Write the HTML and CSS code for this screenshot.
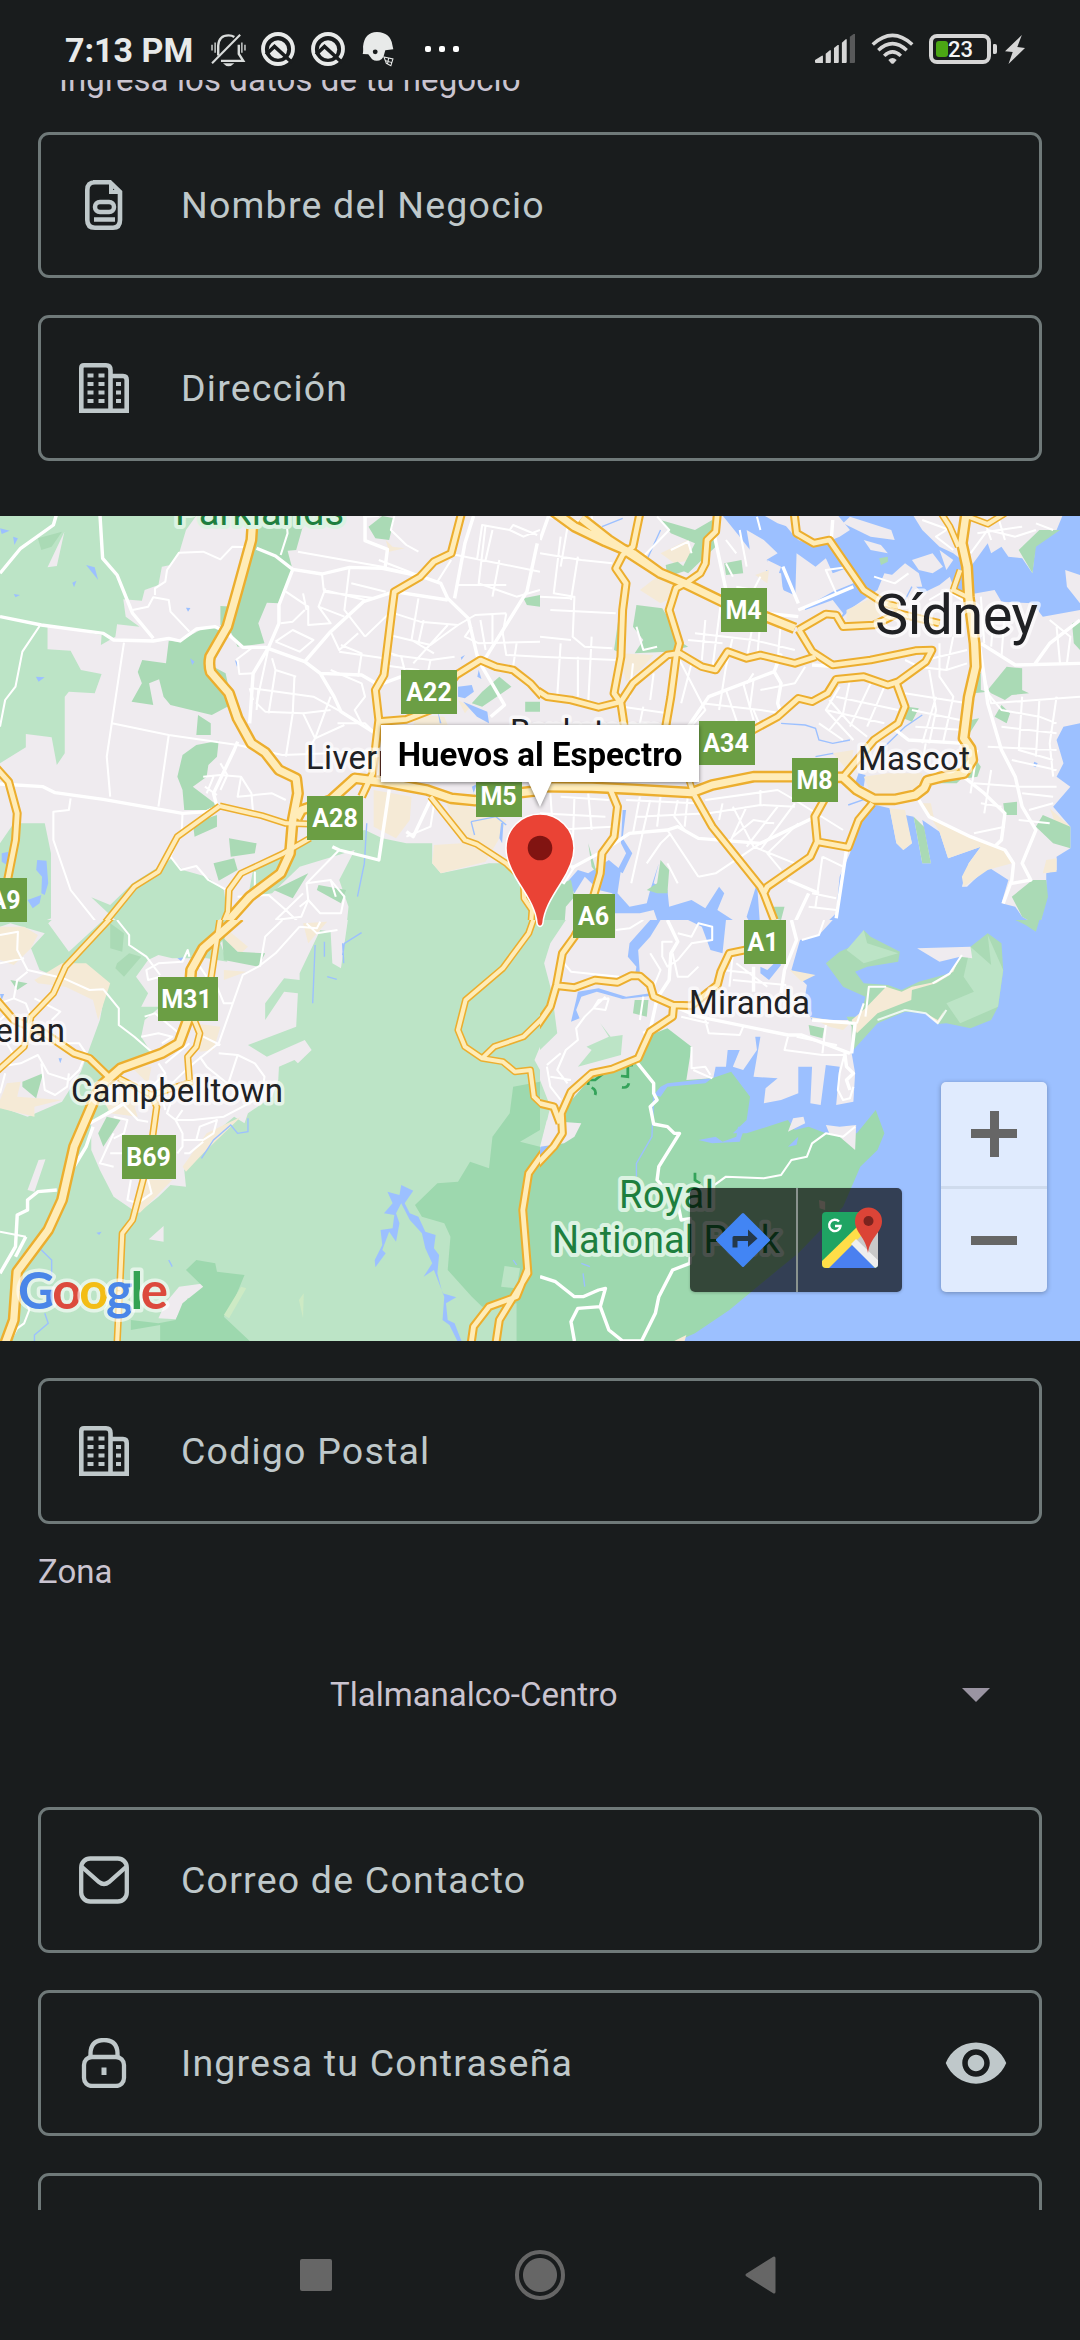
FILE: index.html
```html
<!DOCTYPE html>
<html lang="es">
<head>
<meta charset="utf-8">
<title>Registro de negocio</title>
<link rel="stylesheet" href="styles.css">
</head>
<body>
<div class="screen">
  <header class="status">
    <div class="status-left">
      <span class="clock">7:13 PM</span>
      <svg class="ic-bell" viewBox="611 98 102 101" preserveAspectRatio="none">
        <path d="M632 165V136Q634 105 662 105Q672 105 679 110M692 133V160L705 181H640" fill="none" stroke="#d9dcdb" stroke-width="7"/>
        <path d="M614 188L696 103" stroke="#d9dcdb" stroke-width="6"/>
        <path d="M614 133V150M623 126V157M701 126V157M710 133V150" stroke="#d9dcdb" stroke-width="4"/>
        <path d="M646 188H679Q662 206 646 188Z" fill="#d9dcdb"/>
      </svg>
      <svg class="ic-round" viewBox="0 0 34 34"><use href="#search-badge"/></svg>
      <svg class="ic-round second" viewBox="0 0 34 34"><use href="#search-badge"/></svg>
      <svg class="ic-helmet" viewBox="1051 95 92 104" preserveAspectRatio="none">
        <path fill="#e8eae9" fill-rule="evenodd" d="M1053 160Q1055 154 1054 138Q1058 96 1094 95Q1132 96 1138 132L1141 146L1118 149L1113 168L1108 175Q1094 186 1080 176L1069 161ZM1082 154a7 7 0 1 0 14 0a7 7 0 1 0-14 0Z"/>
        <path d="M1114 169L1140 175L1134 195L1121 188ZM1128 171L1124 191M1117 180L1137 186" fill="none" stroke="#e8eae9" stroke-width="3"/>
      </svg>
      <span class="dots"><i></i><i></i><i></i></span>
    </div>
    <div class="status-right">
      <svg class="ic-signal" viewBox="799 102 116 87" preserveAspectRatio="none">
        <path fill="#d6d6d6" d="M799 187V180L819 167Q822 166 822 169V189H801ZM830 189V161L842 151H845V187L843 189ZM854 189V144L865 135H868V187L866 189ZM877 189V128L888 118H891V187L889 189Z"/>
        <path fill="#58595a" d="M900 189V110L911 102H915V187L913 189Z"/>
      </svg>
      <svg class="ic-wifi" viewBox="960 100 124 92" preserveAspectRatio="none">
        <path fill="none" stroke="#d6d6d6" stroke-width="10" d="M965 134Q1022 80 1079 134M981 151Q1022 112 1063 151M998 168Q1022 144 1046 168"/>
        <path fill="#d6d6d6" d="M1010 180Q1022 168 1034 180L1026 190Q1022 193 1018 190Z"/>
      </svg>
      <span class="battery"><b></b><em>23</em></span>
      <svg class="ic-bolt" viewBox="1349 104 57 87" preserveAspectRatio="none"><path fill="#d6d6d6" d="M1397 104L1349 153L1371 155L1359 191L1406 143L1384 140Z"/></svg>
    </div>
  </header>

  <main class="form">
    <p class="intro">Ingresa los datos de tu negocio</p>
    <div class="field">
      <svg class="lead" viewBox="0 0 50 50" fill="none" stroke="#bfc8ca">
        <path stroke-width="4.600" d="M14 2.300H31L41 12V40Q41 47.700 34 47.700H16Q8.300 47.700 8.300 40V10Q8.300 2.300 16 2.300"/>
        <path stroke-width="4" d="M32 3V12H41"/><rect x="16" y="22" width="19" height="10" rx="5" stroke-width="4.500"/><path stroke-width="4.500" d="M15 39.500H36"/>
      </svg>
      <span class="label">Nombre del Negocio</span>
    </div>
    <div class="field">
      <svg class="lead" viewBox="0 0 50 50"><use href="#building"/></svg>
      <span class="label">Dirección</span>
    </div>

    <section class="map">
      <svg class="map-art" viewBox="0 0 1080 825">
        <defs>
          <g id="building" fill="none" stroke="#bfc8ca">
            <path stroke-width="4.600" d="M2.300 50V5Q2.300 2.300 5 2.300H27Q31.500 2.300 31.500 7V48M32 13H44Q47.700 13 47.700 17V47.700H2"/>
            <path stroke-width="4" stroke-dasharray="6 5" d="M8.500 12.500H27M8.500 21H27M8.500 29.500H27M8.500 38H27"/>
            <path stroke-width="4" d="M37 21h5M37 29.500h5M37 38h5"/>
          </g>
          <g id="search-badge">
            <circle cx="17" cy="17" r="15" fill="none" stroke="#e8eae9" stroke-width="3.800"/>
            <circle cx="17" cy="17.500" r="9.200" fill="#e8eae9"/>
            <path d="M5 22.500L13.500 14.500L31 30.500" fill="none" stroke="#191c1d" stroke-width="3.600"/>
          </g>

          <g id="roads-nw">
            <path class="w1" d="M735 10L730 90L690 240L660 350L610 440Q605 465 612 487L665 550L690 625L730 700L770 727L810 780L860 805L865 850L850 930L842 1030L815 1090L725 1160L630 1270"/>
            <path class="w2" d="M1340 10L1310 130L1260 155L1220 200L1145 245L1137 310L1115 495L1090 540L1100 630L1092 700L1082 790L1050 860M1100 635L1180 628L1250 600L1325 495L1395 450L1440 470L1490 480L1540 520L1575 560"/>
            <path class="w1" d="M862 925L875 900L960 870L1030 805L1110 815L1240 840L1310 865L1380 872L1480 852L1580 840"/>
            <path class="w3" d="M638 888L760 917L830 940L900 942M638 888L515 980L460 1085L390 1130L280 1270M900 985L820 1032L700 1090L665 1140L662 1205L640 1260M1250 860L1350 990L1385 1003L1470 1060L1520 1110L1522 1165L1545 1200L1540 1270"/>
            <path class="w2" d="M-10 775L25 815L50 910L45 990L22 1110"/>
          </g>
          <g id="roads-ne">
            <path class="w1" d="M40 5L100 50L190 95L270 130L350 190L420 220L540 280L660 322L740 355M120 25L200 90L350 190"/>
            <path class="w1" d="M-10 830L150 832L270 838L440 848L500 825L620 800L730 800L880 802L920 840L970 868L1030 868L1090 855L1115 835L1125 812L1170 800L1230 790L1255 750L1250 715L1230 685L1245 560L1265 470L1262 400L1245 260L1240 170L1225 100L1238 5"/>
            <path class="w2" d="M290 10L270 110L240 135L220 175L250 220L240 300L235 440L215 550L235 580L245 650M515 10L510 65L485 90L480 160L465 190L430 215L395 235L375 300L405 400L395 440L380 560L365 650"/>
            <path class="w2" d="M-10 540L20 560L90 570L170 592L235 575L270 520L370 435L405 430L470 470L510 480L545 425L600 445L640 435L740 460L800 440M738 10L745 70L795 100L840 90L900 180L940 240L1000 280L1040 290"/>
            <path class="w2" d="M750 360L830 312L860 315L880 350L970 345L1040 310L1160 340M752 360L790 425L850 465L960 450L1090 422L1138 420L1120 455L1040 515L1010 525L940 500L860 508L835 550L790 575L750 565L690 620L610 665M1035 520L1060 590L1040 640L970 690L885 795"/>
            <path class="w2" d="M965 880L925 930L895 1012L805 995L798 920L825 870M805 995L785 1040L660 1130L650 1150L680 1230M448 855L500 950L640 1130L650 1150M205 840L225 890L215 980L180 1030L175 1090L155 1160"/>
            <path class="w3" d="M1165 10L1190 50L1215 110M1220 180L1200 240L1240 260M1238 18L1300 42L1350 10M430 800L445 850"/>
          </g>
          <g id="roads-sw">
            <path class="w3" d="M325 -10L190 140L155 220L90 290L70 380L-10 455M1552 -10L1535 40L1460 145L1352 240L1330 330L1350 380L1400 415L1460 425L1495 455L1540 450L1550 530L1580 560M1400 415L1435 380L1520 350L1580 290M640 -10L625 90L612 180M560 290L580 340L570 380L545 410L550 480M345 475L440 525L455 560L443 650M440 525L560 485M418 770L385 900L355 940L348 1100L340 1270"/>
            <path class="w2" d="M-10 240L40 300L130 340L215 400L260 415L320 475"/>
            <path class="w1" d="M695 -10L590 85L555 150L545 300L520 370L470 400L350 445L290 500L215 680L180 840L140 930L50 1055L40 1200L15 1270"/>
            <path class="w2" d="M1580 695L1535 760L1518 870L1533 1060L1450 1200L1440 1270M1533 1045L1500 1130L1420 1160L1375 1220L1368 1270"/>
          </g>
          <g id="roads-se">
            <path class="w2" d="M130 -10L100 50L65 100L48 195L30 260L-10 320M48 197L100 203L160 180L225 187L265 167L290 168L320 195L330 230L385 255L440 257L490 215L515 195L525 155L550 100L620 85M388 255L385 290L320 335L300 380L285 415L210 447L150 460L90 515L62 580L65 640L40 680L-10 735M-10 548L40 560L58 610"/>
          </g>
        </defs>

        <svg x="0" y="-6" width="540" height="420" viewBox="0 0 1568 1260" preserveAspectRatio="none">
          <rect class="land" width="1568" height="1260"/>
          <path class="green" fill-rule="evenodd" d="M0 10H575L540 60L520 130L495 165L470 170L460 225L420 240L412 272L358 268L365 320L405 350L340 343L335 380L293 405L295 375L138 345V418L205 422L235 480L295 492L275 550L200 545L188 560V730L165 765L150 682L75 672V712L0 760ZM187 65L138 172L165 168Z"/>
          <path class="green" d="M0 590L28 592L0 640ZM40 940H130L148 1030V1225L90 1250L0 1240V1000ZM265 1162L320 1185L385 1120L500 1045L530 1080L600 1100L650 1140L660 1210L600 1260H370L330 1225ZM735 1080L860 995L1060 960L1110 985L1180 1000H1255V1060L1280 1090L1420 1060H1470L1540 1180L1568 1200V1260H1005L1012 1190L985 1110L1030 1020L870 1070L790 1150L720 1160Z"/>
          <path class="green2" d="M745 10H890L860 120L835 122L850 180L810 280L775 278L750 340L768 400L690 410L672 370L640 345V288L680 290ZM640 350L590 355L520 395L490 392L482 460L413 450L400 486L412 520L382 575L445 585L433 520L462 508L475 560L495 585L615 615L660 590L670 560L655 490L620 470ZM575 615L612 640V675H570ZM570 705L635 692L630 740L605 765L600 800L560 830L630 885L600 900H535L530 840L515 800L530 735ZM560 940L630 915V950L565 980ZM665 985L745 1000L740 1030L670 1040ZM620 1060L680 1045L690 1080L635 1112ZM1110 18L1145 25L1130 90L1090 85L1070 50ZM1450 500L1485 530L1400 590L1370 580L1400 545ZM1520 265L1568 255V290L1530 285ZM110 85L180 65L150 110L120 120ZM1525 575H1568V605H1525ZM925 1125L1005 1140L990 1180L920 1140ZM795 1140L895 1090L850 1165Z"/>
          <path class="sand" d="M1085 840L1195 860L1190 930L1150 985L1085 950ZM1290 865L1385 900L1470 930L1450 985L1410 1055L1280 1090L1255 1060L1260 1005L1340 1000ZM1210 615L1290 620L1300 645H1200ZM1120 90L1140 110L1175 115L1130 125ZM1330 570L1365 590L1350 610ZM0 1245L60 1240L90 1260H0Z"/>
          <path class="water" d="M250 165L275 172L285 210ZM210 218L222 212L215 232ZM0 55L28 62L5 72ZM38 80L52 85L42 105ZM104 500L130 502L112 515ZM540 293L553 294L546 305ZM552 445L565 455L558 465ZM682 450L693 460L688 470ZM1330 530L1370 525L1376 545L1350 565L1330 560ZM1345 575L1415 605L1420 640L1385 620ZM1390 480L1398 507L1386 500ZM1270 600L1282 640H1277ZM5 1030L25 1025L20 1065L5 1055ZM108 1050L135 1052L140 1120L130 1155L120 1150L122 1100L105 1080ZM80 1170L120 1155L115 1180L95 1195ZM1370 830L1385 822L1375 850L1400 880L1385 880ZM40 252L58 255L45 262ZM1338 442L1350 435L1340 450ZM1455 940L1462 935L1458 1000L1450 985Z"/>
          <path class="stream" d="M1065 940L1058 1060L1038 1160M1368 935L1378 975M1368 935L1440 920L1470 945"/>
          <path class="st1" d="M165 10L155 45L60 115L0 190M290 10L298 145L340 195L385 310L445 385M0 320L120 345L300 370L330 390L445 393L490 385L523 393L570 357L625 350L655 365L705 412L770 412L885 455L930 490L1050 495L1100 525M745 115L800 138L850 178L935 192L1015 172L1110 175L1220 198L1280 220L1300 265L1360 325L1385 435L1400 470L1465 585L1425 620M850 178L810 285L810 340L780 412L735 490L725 640M885 455L960 365L1055 275L1145 245L1300 270M930 490L970 560L990 605L1090 670M0 822L125 830L160 848L300 868L530 910L600 905L630 890L620 850L680 720L690 695M1060 18V92L1125 118L1118 175M1400 460L1530 245L1560 100M1320 265L1350 100L1375 18M1130 840L1100 1050L985 1020L965 1010M1250 870L1200 980L1180 965M1100 525L1165 500"/>
          <path class="st2" d="M115 348L65 425L45 530L15 570L0 650M360 398L345 500L310 740L320 860M325 640L490 675L690 705M490 675L460 890M385 300L430 290L445 262L490 270L495 305L550 365M450 255V235L480 215L485 180L520 128L590 125L640 148L675 110L740 112M830 10L835 70L815 135M865 125L1110 170L1220 198M1055 20L1100 18M205 865L200 900L155 905V990L205 1140L290 1250M530 910L528 960L495 1040L525 1080L570 1068L605 1110L655 1138M590 800L640 795L700 800L730 850L735 910M595 830L630 855M620 800L600 850M1145 18L1135 60L1180 105L1215 125M690 450L695 492L740 490M685 450L730 415M780 412L745 580L770 605L880 610L960 600M735 535L910 560L990 605M800 480L780 610M855 500L850 610L830 740M790 445L800 480L860 500M690 705L820 735L960 730L1090 720M880 610L915 685L1000 645M915 685L890 730M960 560L915 685M985 1020L890 1120L895 1170L875 1220L800 1230M890 1120L960 1110L975 1160M740 1085V1130M690 1160L780 1155L830 1200L880 1250M800 1230L880 1150"/>
          <path class="st2" d="M935 192L940 240L1060 270M1015 172L1000 300L1060 380M945 235L925 290L960 340L895 345V290L830 245M925 290L1000 320M940 245L1090 265M1020 220L1120 245M800 395L850 360L910 390L870 425L800 395M960 365L985 420L1040 370M985 425L1115 445M990 405L1050 430L1040 500M1060 380L1130 310M885 300L850 335L815 340M880 250L890 300M1145 310L1220 335L1330 345L1380 315L1470 310M1215 265L1195 390L1260 430M1300 345L1200 460M1130 375L1250 405L1330 345M1120 425L1165 440L1180 500M1140 435L1250 450L1320 440M1110 465L1215 480L1220 505M1250 450L1240 500M1370 350L1350 380L1390 400L1568 395M1395 330L1410 420M1430 310V400M1470 310L1460 370L1470 435L1568 440M1500 400L1490 470M1385 150L1400 45L1480 60L1520 80L1568 60M1300 130L1568 185M1410 45L1390 220L1500 260L1568 240M1430 60L1410 150M1310 150L1270 215M1450 150L1430 260M1330 225L1470 225M1480 60L1490 45L1560 75M1100 150L1220 198M725 535L735 570M750 540L745 600M960 480L1050 520L1060 560L1030 600L1050 640M1090 670L1060 640L980 640M1230 330L1215 400M640 760L660 795L640 840M700 800L690 860L790 850L830 870M895 1170L870 1190M960 1110L1000 1160L990 1210L930 1210L895 1170M1180 980L1250 950L1260 885"/>
          <use href="#roads-nw" class="casing"/><use href="#roads-nw" class="fill"/>
        </svg>

        <svg x="540" y="-6" width="540" height="420" viewBox="0 0 1568 1260" preserveAspectRatio="none">
          <rect class="land" width="1568" height="1260"/>
          <path class="water" d="M525 10L580 80L610 120L600 60L650 90L690 130L640 160L660 185L700 190L705 240L760 265L770 300L850 270L880 310L870 330L910 290L980 240L1000 190L1070 205L1110 250L1160 225L1190 200L1210 260L1320 240L1340 275L1430 280L1460 320L1568 300V10H1520L1500 60L1440 90L1430 190L1400 145L1360 140L1340 110L1310 130L1300 100L1265 150L1250 170L1200 130L1160 110L1110 60L1080 10H860L900 60L870 80L800 110L750 90L720 50L690 40L640 10Z"/>
          <path class="land" d="M615 70L650 110L665 180L600 180ZM660 150L700 170L690 200L720 270L660 240ZM745 130L800 170L830 145L850 190L890 175L910 220L850 245L790 280L740 300ZM880 40L960 80L1030 90L1020 60L900 20ZM940 90L990 105L1010 130L960 120ZM1000 215L1060 160L1100 190L1110 230L1050 230ZM1080 150L1140 130L1170 170L1140 190L1100 180ZM1160 120L1200 150L1180 180ZM1110 20L1140 60L1200 110L1220 60L1180 20ZM860 130L900 160L930 220L900 200ZM1525 180L1568 195V280L1530 230ZM700 30L740 80L750 40Z"/>
          <path class="water" d="M1568 640L1520 650L1500 690L1520 760L1500 800L1540 830L1490 890L1540 950V1015L1500 1040L1500 1080L1470 1090V1160L1450 1250L1400 1220L1380 1190L1340 1180L1360 1110L1300 1070L1240 1130H1225L1245 1060L1280 1010L1185 1045L1160 965L1110 930L1135 1060H1110L1085 920L1060 915L1080 1000L1055 1020L1035 1000L1015 895L975 885L930 930L900 1030L870 1100L860 1210L810 1260H1568ZM925 790L945 795L940 830L915 820ZM240 900L250 900L240 985L268 1030L240 1090L225 1080L250 1030L235 1000ZM80 1115L110 1080L140 1090L200 1050L235 1080L225 1150L260 1190L310 1180L320 1140L345 1060L330 1120L370 1140L375 1190L440 1170L480 1195L520 1130L535 1150L515 1200L560 1230L600 1240L590 1260H350L330 1200L290 1210L215 1210L210 1150L170 1140L130 1100L100 1150ZM630 1120L640 1260H620L600 1220ZM1435 755L1445 760L1440 772L1432 768Z"/>
          <path class="stream" d="M700 640L770 645L800 655L810 690L850 700L900 690M800 740L850 730L900 740M1000 710L1060 650L1110 615M895 885L950 865M180 50L240 25M310 150L350 60M1060 270L1080 230"/>
          <path class="sand" d="M230 430L330 435L300 470L250 515ZM290 240L340 200L390 225L370 270L350 280ZM350 130L430 90L440 150L390 160ZM890 300L960 265L1010 290L960 345H890ZM940 800L1010 790L1110 790L1100 850L960 850ZM1110 880L1135 880L1145 930L1220 970L1340 1010L1370 1060L1300 1080L1230 1130L1225 1100L1245 1060L1280 1010L1185 1045L1160 965ZM1015 895L1060 900L1080 1000L1055 1020L1035 1000ZM850 730L910 720L900 790ZM625 195L665 180L660 220ZM1480 895L1540 950L1500 950ZM1470 1050L1500 1045V1085L1460 1090Z"/>
          <path class="green2" d="M280 285L355 295L370 320L400 390L430 410L370 425L275 430L300 390L270 350ZM230 310L215 420L235 430ZM365 165L400 155L430 180L370 200ZM535 160L585 150L590 190L540 195ZM350 30L450 60L500 30L510 110L430 190L410 180L450 100L380 70ZM1355 470L1400 475V540L1420 550L1370 555L1350 570L1310 550L1300 540ZM1340 585L1365 610L1355 640L1320 620ZM1265 480L1280 490V540L1300 545L1260 550L1250 630L1275 625L1235 690ZM1345 880L1385 875V915H1350ZM1460 915L1540 950L1540 1015L1490 1000L1440 950ZM1085 920L1115 950L1135 1060L1110 1060ZM1370 1160L1430 1110L1470 1110L1475 1160L1450 1250L1400 1220ZM1065 590L1100 595L1080 635L1055 625ZM0 1140L90 1110L100 1160L75 1190L70 1260H0ZM140 1000L165 1090L150 1070ZM310 1140L340 1120L350 1050L375 1080L370 1150L340 1150ZM1160 800H1230L1210 820H1160ZM1260 740L1280 770L1270 800L1240 805ZM1545 340L1568 330V420L1550 400ZM1450 60L1510 60L1440 110L1430 190L1390 120ZM985 145L1010 140V155L990 165ZM660 1190L710 1190L700 1230L680 1225Z"/>
          <path class="st1" d="M0 90L25 18M505 70L540 240M705 170L750 280M430 650L490 560L680 485L700 430M850 30L845 100M750 300L910 230M660 310L750 320M680 485L700 520L690 580L700 610M860 470L790 465M1020 650L1070 690L1230 700M1275 400L1290 500L1300 580L1340 720L1380 800L1400 890L1440 960L1400 1060L1425 1110L1370 1120M1230 800L1290 850L1350 910L1340 990L1320 1010M1100 870L1130 920L1250 980L1350 1020L1375 1060L1370 1110L1345 1180M1280 400L1380 465L1568 460M1435 465L1480 400L1568 330M90 1075L180 1025L260 970L370 960L400 950L460 985L640 1000L800 920M860 1225L890 1020M720 1110L810 1150M780 1150L730 1260"/>
          <path class="st2" d="M60 80L40 250L100 260L95 380L130 410L210 415M0 130L120 150L210 160M110 140L90 270M0 260L90 265M20 20L150 40M80 50L60 170M0 380L90 390M150 380L140 580M60 400L50 560M0 440L220 450M150 18L160 90M110 440V560M30 300L220 310M340 20L375 60L290 150M380 120L430 95L440 130M280 350L300 420L340 410M270 460L260 560M330 490L320 570M240 590L370 610M300 590L290 640M400 440L480 600L430 660M440 460L410 580M530 240L500 480M560 380L540 470L520 600M450 370L620 390L740 420M620 330L600 450M430 390L530 400M480 330L470 450M640 330L630 450M700 330L690 450M590 520L620 630M540 540L580 660M470 580L640 600L700 610M620 510L610 590M640 650L620 600M840 570L900 640L950 680M870 530L830 600L910 690M900 510L880 610L840 660M960 520L900 650M1000 530L950 650M830 600L1000 640M860 560L1040 600M810 640L880 690M1060 450L1100 470L1180 480L1240 460M1160 400V500L1200 560L1170 700M1200 380L1180 480M1060 550L1240 580M1130 480L1150 600L1130 700M1120 450L1240 420M1080 600L1220 630M1090 650L1230 660M1150 560L1110 700M1290 500L1310 580L1568 560M1300 550L1340 600L1450 620L1500 640M1400 560L1390 720L1490 750M1450 570L1440 740M1500 560L1480 700L1490 800M1340 650L1500 670M1300 710L1500 720M1370 750L1500 780M1270 720L1250 850M1310 780L1290 910M1260 820L1390 830L1500 830M1280 880L1340 890M1400 850L1490 860M1390 930L1480 940M1350 950L1260 970M1420 900L1490 880M1280 260L1290 400M1320 280L1310 410M1350 300L1340 440M1500 350L1510 460M1480 330L1540 380L1530 460"/>
          <path class="st2" d="M480 870L690 840L740 870L880 960M490 910L640 885L740 890M560 890L620 1010L740 1060M600 890L550 1000M690 890L600 1010M740 880L640 1020M530 880L520 930M640 840V885M750 940L660 1030L700 1080M560 980L620 930L680 940M460 1100L510 1090L640 1000M370 960L460 1100M290 860L270 970M320 870L300 960L280 1050L265 1120M350 860L340 950M400 870L390 920L420 960M250 870L450 880M280 920L490 910M430 850L420 950M30 850L40 1000M60 860L200 870M0 910L190 920M100 860L95 1010M140 850L150 960M30 960L210 950M45 1060L100 1070L70 1120L40 1100M820 1040L880 1070M790 1150L860 1165M780 1190L860 1200M820 1040L800 1190M1170 780L1110 760L1120 700M1250 130L1300 60L1380 80L1440 60M1290 30L1310 90M1330 20L1350 90M1270 70L1400 50M1180 60L1150 80L1200 120M1110 30L1190 60M1130 270L1180 240L1240 280M970 200L1030 220L1070 190M860 250L830 180L900 170M570 230L620 240L640 200M600 170L580 60M630 20L640 60M540 90L570 130M560 200L540 160M310 1060L350 1000L380 970M370 1060L400 1120M200 690L240 640M240 640L400 650M770 470L740 520L640 540M620 490L600 520M1490 60L1440 40"/>
          <use href="#roads-ne" class="casing"/><use href="#roads-ne" class="fill"/>
        </svg>

        <svg x="0" y="404" width="540" height="421" viewBox="0 0 1568 1263" preserveAspectRatio="none">
          <rect class="green" width="1568" height="1263"/>
          <path class="land" d="M150 0H300L200 95L140 10ZM0 20L30 10L130 40L90 85L115 150L240 200L310 190L290 300L235 455L180 545L80 590L0 560ZM430 120L460 105L500 115H600L660 125L640 70L700 0H1010L990 145L965 130L960 35L930 30L870 160V180L825 175L770 250V300L825 215L865 220L860 320L720 375L775 410L885 360L905 390L865 430L855 420L810 440L808 480L790 530L720 580L710 610L680 590L610 650L535 750L540 800L495 795L460 830L400 880L330 830L290 750L265 690V610L330 560L300 480L440 400L410 350L420 300L465 260L410 260L430 220L395 170ZM112 720L132 718L100 815L80 810ZM475 918V965L432 958ZM520 1100L595 1090L580 1130L545 1135L510 1198L460 1195L480 1150ZM1552 420L1568 380V450ZM1510 1000L1540 990V1020Z"/>
          <path class="sand" d="M0 20H70L110 45L90 85L40 135L0 120ZM100 180L180 130L250 130L320 190L285 300L270 240L190 200L110 190ZM20 490L60 485L50 530L180 540L100 560V590L0 565V540ZM700 590L600 640L530 740L540 755L590 700ZM650 150L715 155L650 180ZM650 20L720 80L700 100L655 70ZM560 310L640 320L620 390L580 395ZM380 440H440L430 490L300 540L320 580L400 590L390 560L440 530V500ZM430 780L500 780L405 880L400 850ZM880 10L950 5L895 70Z"/>
          <path class="green2" d="M320 10L360 40L355 95L320 85ZM340 130L375 100L410 110L360 170L335 145ZM310 590L350 600L300 680L285 640ZM65 485L125 460L105 535L65 500ZM30 180L80 190L50 210ZM645 50L690 95L770 100L750 140L650 120Z"/>
          <path class="park" d="M1568 485L1490 500L1480 580L1430 650L1420 745L1365 725L1330 785L1270 790L1205 855L1225 890L1290 910L1308 950L1300 1050L1370 1130L1400 1160L1500 1150V1263H1568ZM570 1020L625 1030L630 1055L710 1065L680 1140L650 1190L725 1263H465V1215L380 1230V1200L460 1210L510 1200L530 1150L590 1100L540 1050Z"/>
          <path class="green" d="M1568 630L1510 665L1568 680ZM1465 1038L1510 1045L1500 1105L1455 1100Z"/>
          <path class="lime" d="M700 1100L715 1105L665 1195L650 1185ZM868 1140L882 1120L880 1195Z"/>
          <path class="water" d="M1165 795L1200 812L1175 850L1190 880L1215 890L1235 935L1265 945L1260 985L1275 1005L1270 1060L1285 1120L1325 1132L1295 1150L1300 1200L1320 1210L1340 1263H1328L1305 1215L1285 1200L1290 1130L1260 1050L1230 1070L1255 1030L1235 985L1225 940L1190 900L1165 850L1150 880L1160 910L1150 965L1130 935L1110 990L1120 1000L1090 1042L1088 1020L1110 975L1105 930L1140 925L1145 885L1115 880L1140 850L1125 815L1160 825ZM0 222L12 222L5 240ZM170 415L180 415L175 430ZM280 938L295 935L288 945ZM515 115L535 112L525 122Z"/>
          <path class="stream" d="M915 75L908 250M942 65V110M995 105L1000 70L1050 38M995 70L998 130M950 170L978 178M720 595V635L690 640L670 615L620 660L585 715M115 985L150 1020V1075M130 1180L140 1210L100 1245V1263M490 1020L500 1040M1490 1020L1500 1035"/>
          <path class="st1" d="M260 610L330 570L360 550M270 620L250 680L215 740M165 810L110 815L80 840V870L50 885L45 980L0 1060M75 950L45 1010"/>
          <path class="st2" d="M340 0L375 45V75L425 110L465 165M465 170L430 180L425 150L460 130L530 125L545 90L550 110M0 45L52 35L50 90L80 150L185 175L260 210L300 208L345 265V315L390 350L440 395M0 130L70 115M80 155L50 180L40 235L0 250M40 235L75 250L90 290M100 235L175 275L150 300M160 370L230 370L250 400L230 450L200 480L140 460L110 405L60 430L0 440M120 430L130 510L160 525L195 500L200 460M0 520L15 460M20 370L40 405M0 300L30 270M870 20L800 100L750 140L705 165L635 370L580 415L550 440M820 0L770 50L755 140M640 375L590 350M635 400L690 405L740 430L768 470L760 530L650 590L560 600L510 600L485 580L495 550M690 405L660 500M580 410L600 440L720 540M550 440L490 500M420 290L450 280L520 340M410 350L460 340L500 350L470 370M480 430L550 370M460 430L480 460L440 500M630 200L650 250L675 250M580 140L600 170M530 570L510 600L530 640V680L515 700M570 660L580 620L630 600L620 640L590 660H530M535 700H550L590 665M355 550L400 600L430 605M330 590L370 600L360 640L330 655M440 500L470 530L480 570M330 640L290 730L330 740M380 780L370 840L400 850L440 820L430 780M320 700L370 700M0 935L75 950M50 1080L85 1170L70 1210L50 1225L30 1263M870 20L920 25L930 5M980 30L920 40L890 10"/>
          <use href="#roads-sw" class="casing"/><use href="#roads-sw" class="fill"/>
        </svg>

        <svg x="540" y="404" width="540" height="421" viewBox="0 0 1568 1263" preserveAspectRatio="none">
          <rect class="water" width="1568" height="1263"/>
          <path class="land" d="M0 0H320L260 70L255 110L280 140L275 170L290 160L285 90L320 50L350 0H430L470 20L495 90L530 100L540 0H850L810 45L755 60L730 150L775 195L765 260L790 300H915L905 400L915 460L910 545L860 555L870 440L830 435L815 555L785 550L790 440H750V520L700 540L650 550L655 505L690 475L620 470L640 350L625 350L630 390L590 450L560 440L580 390L545 390L540 440L510 440L500 490L420 480L370 520L0 650Z"/>
          <path class="green" d="M0 0H75L30 70L12 130L30 200L40 260L50 340L0 390ZM175 310L205 350L240 345L235 405L110 440L150 390L135 380L200 350ZM0 480L30 560L0 690Z"/>
          <path class="water" d="M110 215L170 205L250 230L320 220V228L240 237L165 215L120 230L105 270L115 295L90 305L105 240ZM640 140L660 150L690 120L700 135L665 180L640 160Z"/>
          <path class="park" d="M370 325L440 380L425 480L500 475L555 455L610 530L600 600L560 640L600 640L720 600L740 630L780 620L830 640L920 640L975 570L1000 640L980 690L930 740L880 860L750 1000L690 1050L550 1170L450 1240L400 1263H0V740L70 650L75 560L150 470L290 420L320 345Z"/>
          <path class="land" d="M20 600L60 605L120 610L100 650L70 670L0 680ZM735 595L765 590L770 610L720 635ZM830 615L870 620L918 615L915 690L870 650L840 640Z"/>
          <path class="water" d="M350 500L370 490L500 475L480 490L370 500L350 530L330 525ZM460 660L510 650L530 665L570 650L575 620L595 620L580 665L500 670ZM720 680L750 650L745 675ZM770 570L790 610L780 620Z"/>
          <path class="green2" d="M940 30L960 50L1045 95L1040 125L950 140L915 155L940 190L1010 195L1050 210L1100 185L1190 160L1220 110L1250 80L1300 40L1340 70L1345 150L1330 260L1310 300L1250 325L1180 310L1155 312L1120 280L1060 275L980 310L905 395V320L890 290L930 290L945 230L880 200L830 130L870 95L925 70ZM780 315L825 325L820 355L785 345ZM275 240L315 240L310 290L270 280ZM1380 0H1450L1440 35L1410 15Z"/>
          <path class="green" d="M1250 80L1310 135L1300 45L1345 150L1330 260L1220 310L1180 250L1260 215L1230 170ZM890 90L940 30L950 70L1040 100L940 130Z"/>
          <path class="land" d="M1095 85L1250 80L1255 115L1220 110L1160 125Z"/>
          <path class="sand" d="M1005 200L1050 215L1080 200L1150 185L1200 155L1220 110L1190 165L1150 190L1080 210L1078 240L980 280L920 340L905 300L945 265ZM725 150L800 165L760 185ZM780 290L900 310L880 330L840 320ZM1120 280L1155 312L1175 270L1155 300ZM425 1245L390 1263H420ZM810 840L828 845V870L812 865Z"/>
          <path class="trail" d="M185 460L160 480H140V495M270 435L250 437M255 440V470L235 468M258 490Q255 505 238 502M150 503Q165 510 160 525M450 758V780L465 790"/>
          <path class="stream" d="M330 530L325 650L280 730V770M120 1030L145 1040M125 1060L130 1100"/>
          <path class="st1" d="M280 425L330 490V520L340 540L320 560L330 612L370 620L390 640H405L345 740L340 780L400 850L410 900L440 895M330 225L380 255L460 290L720 345L760 345L900 400M790 300L915 310L905 400M0 1070L45 1085L100 1130H125L170 1110L190 1105L175 1160L110 1165L90 1205L100 1263M175 1160L200 1230L240 1263H295L335 1180L345 1130L385 1050L435 1030L440 950M730 0L745 60L710 150L700 220M620 140V215M370 0L400 65L380 100L375 180L340 235L320 330L300 340M885 400L890 440L910 460L890 480L900 510"/>
          <path class="st2" d="M70 130L90 155L230 170M190 230L130 290L105 325L110 360L75 390L50 450L80 490M20 435L60 400M20 440L30 500L60 540M30 470L90 480M200 235L170 240L155 265L190 270L200 235M385 65H355V110L370 140L400 120L440 70L500 60V20L460 10L440 50L400 40M320 100L350 150L330 200M385 100L400 170L430 170L460 140M560 100L550 200M530 150L615 160M560 180L715 195M570 130L660 200M480 300L490 340L580 345L590 320M410 290L490 310M720 350L710 390L820 405L880 405M745 350L860 375L820 370M830 315L820 400M885 400L870 460L865 510L880 540L900 535L910 500M440 380V445L480 440L495 465M445 450L500 475M945 290L955 200H1005M940 250L920 310M1225 105L1190 160L1140 190M500 800L540 770L650 775L700 765L730 720L775 710L790 670L830 640L880 650L915 620M480 830L500 800M760 60L810 45L825 0M220 30L260 25L300 0M290 300L300 230"/>
          <path class="st2" d="M980 300L1060 270L1120 280L1155 310L1180 270" opacity=".8"/>
          <use href="#roads-se" class="casing"/><use href="#roads-se" class="fill"/>
        </svg>

        <g class="towns">
          <text class="small" x="510" y="227" textLength="152">Bankstown</text>
          <text class="small" x="306" y="253" textLength="137">Liverpool</text>
          <text class="small" x="858" y="253.500" textLength="112">Mascot</text>
          <text class="small" x="689" y="498" textLength="121">Miranda</text>
          <text class="small" x="65" y="526" text-anchor="end">Narellan</text>
          <text class="small" x="71" y="586" textLength="212">Campbelltown</text>
          <text class="city" x="875" y="118" textLength="163">Sídney</text>
        </g>
        <g class="parks">
          <text x="175" y="9" textLength="169">Parklands</text>
          <text x="619" y="692" textLength="95">Royal</text>
          <text x="552" y="737" textLength="228">National Park</text>
        </g>
        <g class="shields">
          <rect x="401" y="154" width="56" height="44"/><text x="429" y="185">A22</text>
          <rect x="307" y="280" width="56" height="44"/><text x="335" y="311">A28</text>
          <rect x="476" y="257" width="46" height="44"/><text x="498.500" y="288.500">M5</text>
          <rect x="721" y="72" width="46" height="44"/><text x="743.500" y="103">M4</text>
          <rect x="699" y="205" width="56" height="44"/><text x="726" y="236">A34</text>
          <rect x="792" y="242" width="46" height="44"/><text x="814.500" y="273">M8</text>
          <rect x="573" y="378" width="42" height="44"/><text x="593.500" y="409">A6</text>
          <rect x="-15" y="362" width="42" height="44"/><text x="5" y="393">A9</text>
          <rect x="744" y="404" width="42" height="44"/><text x="763" y="435">A1</text>
          <rect x="158" y="461" width="60" height="44"/><text x="186.500" y="492">M31</text>
          <rect x="122" y="619" width="54" height="44"/><text x="148.500" y="650">B69</text>
        </g>
        <text class="brand" x="18" y="793" textLength="150"><tspan fill="#4a86e8">G</tspan><tspan fill="#dc4a3d">o</tspan><tspan fill="#f3bd16">o</tspan><tspan fill="#4a86e8">g</tspan><tspan fill="#35a253">l</tspan><tspan fill="#dc4a3d">e</tspan></text>
        <path d="M540 410.500Q537.500 410 537 407C536 395 530 384 519 367C510 353 506 343 506 332A34 34 0 0 1 574 332C574 343 570 353 561 367C550 384 544 395 543 407Q542.500 410 540 410.500Z" fill="#ea4335" stroke="#fff" stroke-width="1.500"/>
        <circle cx="540" cy="332" r="12.300" fill="#811411"/>
      </svg>

      <div class="info">Huevos al Espectro</div>

      <div class="open-bar">
        <span class="open-cell"><svg viewBox="0 0 54 54" width="54" height="56"><path d="M27 1.500L52.500 27L27 52.500L1.500 27Z" fill="#4285f4" stroke="#4285f4" stroke-width="3" stroke-linejoin="round"/><path d="M16.500 34.500V24.500Q16.500 23 18 23H32V16.500L41.500 25.500L32 34V28H21.500V34.500Z" fill="#24384a"/></svg></span>
        <span class="open-cell"><svg viewBox="0 0 60 62" width="60" height="62">
          <clipPath id="tile"><rect x="0" y="5" width="56" height="56" rx="4"/></clipPath>
          <g clip-path="url(#tile)"><rect y="5" width="56" height="56" fill="#1fa463"/><path d="M56 5V61L30 34Z" fill="#c9c9c9"/><path d="M4 61L29 35L53 61Z" fill="#4a80f0"/><path d="M0 54L36 19L42 26L7 61H0Z" fill="#ffde48"/><path d="M29 37L34 32L60 57L56 64Z" fill="#eeeeee"/></g>
          <path d="M46 46C44 30 33 26 33 14A13.500 13.500 0 0 1 60 14C60 26 48 30 46 46Z" fill="#db4437"/><circle cx="46.500" cy="14" r="5" fill="#7b231e"/>
          <path d="M17 14.500A5.700 5.700 0 1 0 18.500 19H13" fill="none" stroke="#fff" stroke-width="2.400"/>
        </svg></span>
      </div>
      <div class="zoom"><span class="plus"></span><span class="minus"></span></div>
    </section>

    <div class="field postal">
      <svg class="lead" viewBox="0 0 50 50"><use href="#building"/></svg>
      <span class="label">Codigo Postal</span>
    </div>
    <p class="zone">Zona</p>
    <div class="select"><span>Tlalmanalco-Centro</span><i class="caret"></i></div>
    <div class="field">
      <svg class="lead" viewBox="0 0 50 50" fill="none" stroke="#bfc8ca" stroke-width="4.300"><rect x="2.200" y="3.500" width="45.600" height="43" rx="9"/><path d="M3 12L20 27Q25 31 30 27L47 12"/></svg>
      <span class="label">Correo de Contacto</span>
    </div>
    <div class="field">
      <svg class="lead" viewBox="0 0 50 50" fill="none" stroke="#bfc8ca" stroke-width="4.300"><rect x="5" y="19" width="40" height="29" rx="8"/><path d="M11.500 20V15Q12 2 25 2Q38 2 38.500 15V20"/><path stroke-width="5" d="M25 29.500V37"/></svg>
      <span class="label">Ingresa tu Contraseña</span>
      <svg class="eye" viewBox="0 0 24 24"><path fill="#bfc8ca" d="M12 4.500C7 4.500 2.730 7.610 1 12c1.730 4.390 6 7.500 11 7.500s9.270-3.110 11-7.500c-1.730-4.390-6-7.500-11-7.500zM12 17c-2.760 0-5-2.240-5-5s2.240-5 5-5 5 2.240 5 5-2.240 5-5 5zm0-8c-1.660 0-3 1.340-3 3s1.340 3 3 3 3-1.340 3-3-1.340-3-3-3z"/></svg>
    </div>
    <div class="field"></div>
  </main>

  <nav class="nav">
    <span class="recent"></span>
    <span class="home"></span>
    <svg class="back" viewBox="0 0 31 38"><path d="M29 2V36L2 19Z" fill="#666" stroke="#666" stroke-width="3" stroke-linejoin="round"/></svg>
  </nav>
</div>
</body>
</html>
```
FILE: styles.css
```css
* { box-sizing: border-box; margin: 0; padding: 0; }
body { background: #191c1d; font-family: Roboto, "Liberation Sans", sans-serif; }
svg { display: block; }
.screen { width: 1080px; height: 2340px; display: flex; flex-direction: column; overflow: hidden; background: #191c1d; }

.status { height: 80px; flex: none; display: flex; justify-content: space-between; padding: 0 55px 0 65px; }
.status-left, .status-right { display: flex; align-items: flex-start; }
.clock { width: 146px; margin-top: 30px; font-size: 34px; line-height: 40px; font-weight: 700; color: #e8eae9; white-space: nowrap; }
.ic-bell { width: 35px; height: 34px; margin-top: 33px; }
.ic-round { width: 34px; height: 34px; margin: 32px 0 0 15px; }
.ic-round.second { margin-left: 16px; }
.ic-helmet { width: 32px; height: 35px; margin: 32px 0 0 17px; }
.dots { display: flex; gap: 8px; margin: 46px 0 0 31px; }
.dots i { width: 6px; height: 6px; border-radius: 2px; background: #fff; }
.ic-signal { width: 40px; height: 29px; margin-top: 34px; }
.ic-wifi { width: 43px; height: 31px; margin: 33px 0 0 16px; }
.battery { position: relative; display: flex; width: 62px; height: 30px; margin: 34px 0 0 15px; border: 4px solid #d6d6d6; border-radius: 8px; }
.battery::after { content: ""; position: absolute; left: 60px; top: 6px; width: 4px; height: 10px; border-radius: 1px 2px 2px 1px; background: #d6d6d6; }
.battery b { width: 12px; height: 16px; margin: 3px 0 0 3px; border-radius: 3px; background: #4ba614; }
.battery em { font-style: normal; font-weight: 500; font-size: 22px; line-height: 22px; margin-top: 1px; color: #f4f4f4; }
.ic-bolt { width: 20px; height: 29px; margin: 35px 0 0 14px; }

.form { height: 2130px; flex: none; overflow: hidden; display: flex; flex-direction: column; }
.intro { height: 52px; flex: none; padding-left: 59px; font-size: 33px; line-height: 0; letter-spacing: 0.080px; color: #cac4d0; white-space: nowrap; }
.field { height: 146px; flex: none; margin: 0 38px 37px; border: 3px solid #6f7979; border-radius: 11px; display: flex; align-items: center; padding: 0 33px 0 38px; }
.lead { width: 50px; height: 50px; flex: none; }
.label { flex: 1; margin-left: 52px; font-size: 37.500px; line-height: 44px; letter-spacing: 1.200px; color: #bfc8ca; white-space: nowrap; }
.eye { width: 66px; height: 66px; margin-right: -3px; }

.map { position: relative; height: 825px; flex: none; margin-top: 18px; overflow: hidden; }
.map-art { width: 1080px; height: 825px; }
.land { fill: #efebef; }
.green { fill: #bce4c6; }
.green2 { fill: #aadab5; }
.park { fill: #9dd8ae; }
.lime { fill: #cdeac4; }
.sand { fill: #f5ead6; }
.water { fill: #9cc0ff; }
.stream { fill: none; stroke: #9cc0ff; stroke-width: 4; }
.trail { fill: none; stroke: #34a35a; stroke-width: 8; }
.st1, .st2 { fill: none; stroke: #fff; stroke-linejoin: round; }
.st1 { stroke-width: 10; }
.st2 { stroke-width: 6; }
.casing { --a: 35px; --b: 26px; --c: 21px; fill: none; stroke: #ecae2e; stroke-linejoin: round; }
.fill { --a: 21px; --b: 14px; --c: 12px; fill: none; stroke: #ffecb8; stroke-linejoin: round; }
.w1 { stroke-width: var(--a); }
.w2 { stroke-width: var(--b); }
.w3 { stroke-width: var(--c); }
.map-art text { paint-order: stroke; stroke-linejoin: round; }
.towns { fill: #202124; stroke: rgba(255, 255, 255, 0.650); stroke-width: 7px; }
.small { font-size: 33px; }
.city { font-size: 56px; }
.parks { font-size: 38px; fill: #1e7f3e; stroke: #dcf3e2; stroke-width: 8px; }
.shields rect { fill: #6b9e44; }
.shields text { font-size: 25px; font-weight: 700; fill: #fff; text-anchor: middle; }
.brand { font-family: Lato, sans-serif; font-size: 51px; font-weight: 700; stroke: rgba(255, 255, 255, 0.600); stroke-width: 7px; }

.info { position: absolute; left: 381px; top: 209px; width: 318px; height: 57px; background: #fff; font-weight: 700; font-size: 33px; line-height: 59px; text-align: center; color: #000; white-space: nowrap; filter: drop-shadow(0 1px 2px rgba(0, 0, 0, 0.500)); }
.info::after { content: ""; position: absolute; left: 147px; top: 56px; border: 12.500px solid transparent; border-top: 26px solid #fff; border-bottom: 0; }
.open-bar { position: absolute; left: 690px; top: 672px; width: 212px; height: 104px; border-radius: 5px; background: rgba(0, 0, 0, 0.670); display: flex; box-shadow: 0 1px 3px rgba(0, 0, 0, 0.200); }
.open-cell { width: 106px; display: flex; align-items: center; justify-content: center; }
.open-cell + .open-cell { border-left: 2px solid #8a938f; padding-left: 4px; align-items: flex-start; padding-top: 19px; }
.zoom { position: absolute; left: 941px; top: 566px; width: 106px; height: 210px; border-radius: 5px; background: #e0ebfe; box-shadow: 0 1px 5px rgba(0, 0, 0, 0.300); display: flex; flex-direction: column; }
.plus, .minus { flex: 1; background: linear-gradient(#666, #666) center / 46px 9px no-repeat; }
.plus { background: linear-gradient(#666, #666) center / 46px 9px no-repeat, linear-gradient(#666, #666) center / 9px 46px no-repeat; border-bottom: 3px solid #cfdbed; }

.postal { margin-top: 37px; margin-bottom: 0; }
.zone { height: 48px; flex: none; margin: 24px 0 0 38px; font-size: 33px; line-height: 48px; color: #cac4d0; }
.select { height: 210px; flex: none; margin-bottom: 1px; display: flex; align-items: center; padding-left: 330px; padding-right: 90px; justify-content: space-between; font-size: 33px; line-height: 40px; color: #cac4d0; padding-bottom: 12px; }
.caret { border: 14px solid transparent; border-top-color: #9a94a2; border-bottom: 0; }

.nav { height: 130px; flex: none; display: flex; align-items: center; padding-left: 300px; }
.recent { width: 32px; height: 32px; border-radius: 2px; background: #666; }
.home { width: 50px; height: 50px; margin-left: 183px; border: 4px solid #666; border-radius: 50%; background: radial-gradient(circle, #666 16.500px, transparent 17.500px); }
.back { width: 31px; height: 38px; margin-left: 180px; }
```
